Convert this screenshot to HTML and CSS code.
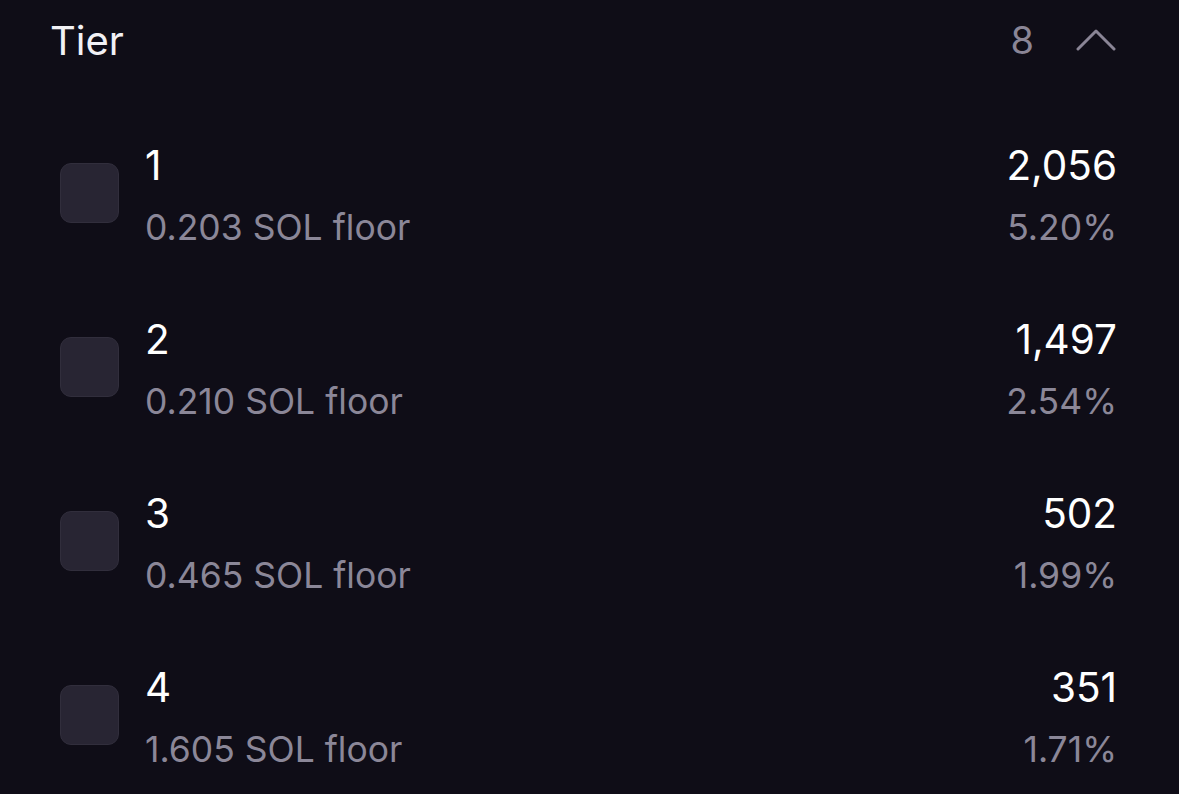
FILE: index.html
```html
<!DOCTYPE html>
<html>
<head>
<meta charset="utf-8">
<link rel="stylesheet" href="styles.css">
</head>
<body>
<div class="panel">
  <div class="header">
    <span class="title">Tier</span>
    <div class="header-right">
      <span class="count">8</span>
      <svg class="chevron" width="40" height="24" viewBox="0 0 40 24"><path d="M2 21 L20 3 L38 21" fill="none" stroke="#8a8596" stroke-width="3" stroke-linecap="round" stroke-linejoin="round"/></svg>
    </div>
  </div>
  <div class="list">
    <div class="row">
      <div class="check"></div>
      <div class="info"><div class="name">1</div><div class="sub">0.203 SOL floor</div></div>
      <div class="stats"><div class="num">2,056</div><div class="sub">5.20%</div></div>
    </div>
    <div class="row">
      <div class="check"></div>
      <div class="info"><div class="name">2</div><div class="sub">0.210 SOL floor</div></div>
      <div class="stats"><div class="num">1,497</div><div class="sub">2.54%</div></div>
    </div>
    <div class="row">
      <div class="check"></div>
      <div class="info"><div class="name">3</div><div class="sub">0.465 SOL floor</div></div>
      <div class="stats"><div class="num">502</div><div class="sub">1.99%</div></div>
    </div>
    <div class="row">
      <div class="check"></div>
      <div class="info"><div class="name">4</div><div class="sub">1.605 SOL floor</div></div>
      <div class="stats"><div class="num">351</div><div class="sub">1.71%</div></div>
    </div>
  </div>
</div>
</body>
</html>
```
FILE: styles.css
```css
html, body {
  margin: 0;
  padding: 0;
  background: #0f0d17;
  width: 1179px;
  height: 794px;
  overflow: hidden;
}
body {
  font-family: Inter, "Noto Sans", sans-serif;
  color: #ffffff;
}
.panel {
  padding: 0 62px 0 50px;
}
.header {
  display: flex;
  align-items: center;
  justify-content: space-between;
  height: 80px;
}
.title {
  font-size: 40px;
  color: #f2f1f5;
}
.header-right {
  display: flex;
  align-items: center;
  gap: 42px;
}
.count {
  font-size: 38px;
  color: #8a8596;
}
.chevron {
  display: block;
  margin-right: 1px;
}
.list {
  display: flex;
  flex-direction: column;
  padding-top: 61px;
  gap: 50px;
  padding-left: 10px;
}
.row {
  display: flex;
  align-items: flex-start;
  height: 124px;
}
.check {
  width: 57px;
  height: 58px;
  border-radius: 11px;
  background: #282533;
  border: 1px solid #312e3c;
  margin-right: 26px;
  margin-top: 22px;
}
.info {
  flex: 1;
}
.name, .num {
  font-size: 40.5px;
  line-height: 50px;
  color: #ffffff;
}
.sub {
  font-size: 35.5px;
  line-height: 74px;
  color: #8b8798;
}
.stats {
  text-align: right;
}
```
